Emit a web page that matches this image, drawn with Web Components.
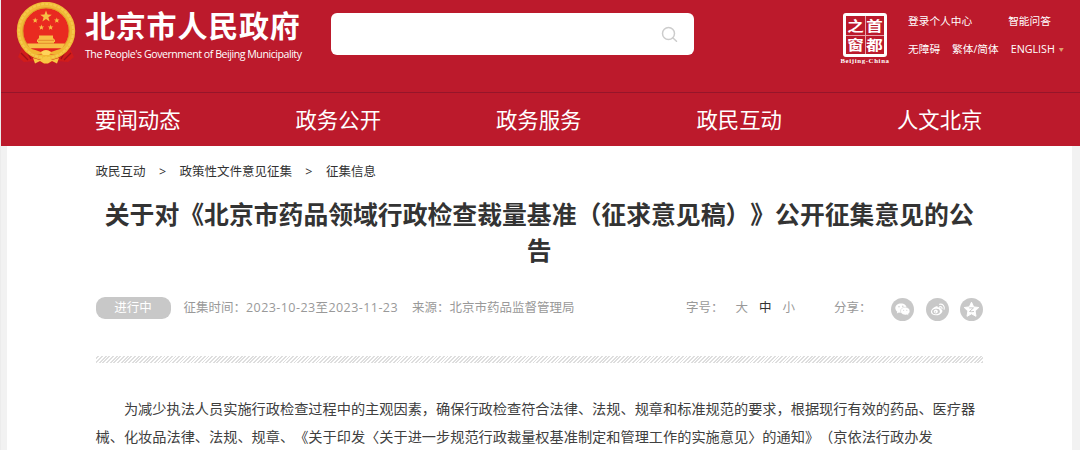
<!DOCTYPE html>
<html lang="zh-CN">
<head>
<meta charset="utf-8">
<title>北京市人民政府</title>
<style>
  body {
    margin: 0;
    width: 1080px;
    height: 450px;
    overflow: hidden;
    background: #f2f2f2;
    color: #333;
    font-family: "Open Sans", "Noto Sans CJK SC", sans-serif;
    text-spacing-trim: space-all;
  }
</style>
</head>
<body>
<gov-page>
  <gov-header slot="header"></gov-header>
  <gov-nav slot="header">
    <span>要闻动态</span>
    <span>政务公开</span>
    <span>政务服务</span>
    <span>政民互动</span>
    <span>人文北京</span>
  </gov-nav>
  <gov-crumbs>
    <span>政民互动</span><span>&gt;</span><span>政策性文件意见征集</span><span>&gt;</span><span>征集信息</span>
  </gov-crumbs>
  <gov-article>
    <span slot="title">关于对《北京市药品领域行政检查裁量基准（征求意见稿）》公开征集意见的公<br>告</span>
    <gov-meta slot="meta"></gov-meta>
    <span>为减少执法人员实施行政检查过程中的主观因素，确保行政检查符合法律、法规、规章和标准规范的要求，根据现行有效的药品、医疗器<br>械、化妆品法律、法规、规章、《关于印发〈关于进一步规范行政裁量权基准制定和管理工作的实施意见〉的通知》（京依法行政办发</span>
  </gov-article>
</gov-page>

<script>
/**
 * Base class, clones its markup into an open shadow root.
 */
class GovElement extends HTMLElement {
  /**
   * Constructor for all page elements.
   */
  constructor () {
    super()
    const template = document.createElement('template')
    template.innerHTML = this.constructor.markup
    this.attachShadow({ mode: 'open' })
    this.shadowRoot.appendChild(template.content.cloneNode(true))
  }
}

customElements.define('gov-page',
  /**
   * Represents the page frame with the red top and the white sheet.
   */
  class extends GovElement {
    static markup = `
      <style>
        :host { display: block; height: 450px; border-left: 1px solid #ececec; box-sizing: border-box; }
        .top { background: #bc1a2c; height: 146px; }
        main {
          box-sizing: border-box;
          height: 304px;
          margin: 0 8px 0 6px;
          padding: 0 89px 0 88.5px;
          background: #fff;
        }
      </style>
      <div class="top"><slot name="header"></slot></div>
      <main><slot></slot></main>
    `
  }
)

customElements.define('national-emblem',
  /**
   * Represents the emblem at the far left of the header.
   */
  class extends GovElement {
    static markup = `
      <style>
        :host { display: block; width: 60px; height: 64px; }
        svg { display: block; }
      </style>
      <svg width="60" height="64" viewBox="0 0 60 64">
        <path d="M7 44 L2 55 L8 60 L18 59 L30 62 L42 59 L52 60 L58 55 L53 44 Z" fill="#d11c1b"/>
        <path d="M5 51 l7 7 M55 51 l-7 7 M10 48 l5 9 M50 48 l-5 9" stroke="#9e1017" stroke-width="1.3"/>
        <circle cx="30" cy="29" r="26" fill="#e92a20" stroke="#f0bb37" stroke-width="6.4"/>
        <circle cx="30" cy="29" r="27" fill="none" stroke="#f6c94c" stroke-width="2" stroke-dasharray="3 1.2"/>
        <circle cx="30" cy="29" r="23.3" fill="none" stroke="#d99022" stroke-width=".7"/>
        <g fill="#f7be45">
          <path id="star" d="M30 8.5 l1.5 4 4.3.2-3.4 2.6 1.2 4.1-3.6-2.4-3.6 2.4 1.2-4.1-3.4-2.6 4.3-.2z"/>
          <use href="#star" transform="translate(4.8 11.5) scale(.48)"/>
          <use href="#star" transform="translate(26.4 11.5) scale(.48)"/>
          <use href="#star" transform="translate(11 18.5) scale(.48)"/>
          <use href="#star" transform="translate(20.2 18.5) scale(.48)"/>
          <path d="M23 33.500 H37 V36 L39 38 V40 H21 V38 L23 36 Z"/>
          <rect x="22" y="40" width="16" height="2.500"/>
          <path d="M11 41.500 H49 L46 46.500 H14 Z"/>
        </g>
        <path d="M22 38.300 H38 M22 41.300 H38" stroke="#dd7722" stroke-width=".7"/>
        <path d="M15 46.500 H45 L40 52 L30 53 L20 52 Z" fill="#e2231d"/>
        <path d="M12 46 Q20 48 25 50 Q30 46 35 50 Q40 48 48 46 L43 52 H35 L30 56 L25 52 H17 Z" fill="#f2b632"/>
        <path d="M25 50 Q30 46.500 35 50 L33 53 H27 Z" fill="#ffd35a"/>
        <path d="M17 56 L24 58 L30 54 L36 58 L43 56 L41 61.500 L36 59 L32 61.500 H28 L24 59 L19 61.500 Z" fill="#f8c743"/>
      </svg>
    `
  }
)

customElements.define('capital-window',
  /**
   * Represents the seal with four characters.
   */
  class extends GovElement {
    static markup = `
      <style>
        :host { display: block; width: 50px; color: #fff; }
        .seal {
          display: grid;
          grid-template: 19px 19px / 19px 19px;
          place-items: center;
          width: 38px;
          margin: 0 auto;
          border: 3px solid #fff;
          border-radius: 3px;
          font: 700 16.5px/17px "Noto Sans CJK SC", sans-serif;
          background:
            linear-gradient(#e8a4ab, #e8a4ab) 50% 0 / 1px 100% no-repeat,
            linear-gradient(#e8a4ab, #e8a4ab) 0 50% / 100% 1px no-repeat;
        }
        .seal span { transform: scaleY(.82); }
        p { margin: 0; font: 700 6.8px/8px "Liberation Serif", serif; letter-spacing: .65px; text-align: center; white-space: nowrap; }
      </style>
      <div class="seal"><span>之</span><span>首</span><span>窗</span><span>都</span></div>
      <p>Beijing-China</p>
    `
  }
)

customElements.define('gov-header',
  /**
   * Represents the header with brand, search and links.
   */
  class extends GovElement {
    static markup = `
      <style>
        :host {
          display: flex;
          box-sizing: border-box;
          height: 93px;
          padding: 2px 0 0 15px;
          border-bottom: 1px solid #96152a;
          color: #fff;
          white-space: nowrap;
        }
        .brand { width: 240px; margin-left: 9px; padding-top: 3px; }
        h1 { margin: 0; font: 700 30px/38px "Noto Sans CJK SC", sans-serif; letter-spacing: .8px; }
        .brand p { margin: 3px 0 0; font-size: 10.6px; line-height: 16px; letter-spacing: -.46px; }
        .search {
          display: flex;
          align-items: center;
          justify-content: flex-end;
          box-sizing: border-box;
          width: 363px;
          height: 42px;
          margin: 11px 0 0 6px;
          padding-right: 16px;
          border-radius: 6px;
          background: #fff;
        }
        capital-window { margin: 11px 0 0 146px; }
        .links { margin: 11px 0 0 18px; font-size: 10.7px; line-height: 16px; }
        .links div { display: flex; height: 28px; }
        .wide { gap: 36px; }
        .tight { gap: 12px; }
        small { font-size: 5px; color: #e0a070; margin-left: 4px; vertical-align: 2px; }
      </style>
      <national-emblem></national-emblem>
      <div class="brand">
        <h1>北京市人民政府</h1>
        <p>The People's Government of Beijing Municipality</p>
      </div>
      <div class="search">
        <svg width="17" height="17" viewBox="0 0 17 17" fill="none" stroke="#ccc" stroke-width="1.5">
          <circle cx="7.5" cy="7.5" r="6"/>
          <path d="M12 12 L15.5 15.2" stroke-linecap="round"/>
        </svg>
      </div>
      <capital-window></capital-window>
      <div class="links">
        <div class="wide"><span>登录个人中心</span><span>智能问答</span></div>
        <div class="tight"><span>无障碍</span><span>繁体/简体</span><span>ENGLISH<small>▼</small></span></div>
      </div>
    `
  }
)

customElements.define('gov-nav',
  /**
   * Represents the main navigation.
   */
  class extends GovElement {
    static markup = `
      <style>
        :host {
          display: flex;
          justify-content: space-between;
          height: 53px;
          margin: 0 97.5px 0 94px;
          color: #fff;
          font: 21.4px/51px "Noto Sans CJK SC", sans-serif;
        }
      </style>
      <slot></slot>
    `
  }
)

customElements.define('gov-crumbs',
  /**
   * Represents the breadcrumb trail.
   */
  class extends GovElement {
    static markup = `
      <style>
        :host { display: flex; gap: 13.4px; padding-top: 15px; height: 35px; font-size: 12.5px; line-height: 21px; }
      </style>
      <slot></slot>
    `
  }
)

customElements.define('share-icon',
  /**
   * Represents a round share button, picked by the name attribute.
   */
  class extends GovElement {
    static markup = `
      <style>
        :host { display: block; width: 23px; height: 23px; border-radius: 50%; background: #c8c8c8; }
        svg { display: none; }
        :host([name=wechat]) .wechat, :host([name=weibo]) .weibo, :host([name=qzone]) .qzone { display: block; }
      </style>
      <svg class="wechat" width="23" height="23" viewBox="0 0 23 23" fill="#fff">
        <path d="M10 5.500c-3.300 0-5.700 2-5.700 4.600 0 1.500.8 2.800 2 3.600l-.5 1.800 2.100-1.100c.7.2 1.400.3 2.100.3 3.300 0 5.700-2 5.700-4.600S13.300 5.500 10 5.500z"/>
        <path d="M14.200 9.200c-2.700 0-4.700 1.700-4.700 3.900s2 3.900 4.700 3.900c.6 0 1.200-.1 1.700-.3l1.700.9-.4-1.500c1.100-.7 1.700-1.800 1.700-3 0-2.200-2-3.900-4.700-3.900z" stroke="#c8c8c8" stroke-width=".5"/>
        <g fill="#c8c8c8"><circle cx="8" cy="8.800" r=".7"/><circle cx="11.800" cy="8.300" r=".7"/><circle cx="12.700" cy="12.300" r=".5"/><circle cx="15.800" cy="12.300" r=".5"/></g>
      </svg>
      <svg class="weibo" width="23" height="23" viewBox="0 0 23 23" fill="none">
        <path d="M9.800 8.400c1.200-.6 2.200-.2 2 1.200 1.900-.7 3.300-.3 2.800 1.300 1.600.5 2.200 1.600 1.600 3-.8 1.900-3.400 3.400-6.300 3.400-3 0-5-1.500-5-3.600 0-1.900 2.300-4.200 4.900-5.300z" fill="#fff"/>
        <ellipse cx="10" cy="13.500" rx="3.900" ry="2.700" fill="#c8c8c8" transform="rotate(-8 10 13.500)"/>
        <circle cx="9.800" cy="13.600" r="2" fill="#fff"/>
        <circle cx="9.400" cy="13.900" r=".7" fill="#c8c8c8"/>
        <path d="M13.500 6.300c3.100-.7 5.600 1.900 4.600 5M13.800 8.600c1.500-.3 2.600.7 2.200 2.200" stroke="#fff" stroke-width="1.100" stroke-linecap="round"/>
      </svg>
      <svg class="qzone" width="23" height="23" viewBox="0 0 23 23">
        <path d="M11.500 4.200l2.200 4.700 5.100.6-3.700 3.500.9 5.300-4.500-2.500L7 18.300l.9-5.300-3.700-3.500 5.100-.6z" fill="#fff" stroke="#fff" stroke-width="1" stroke-linejoin="round"/>
        <path d="M9.200 9.900h4.300l-4 3.600c1.300.3 2.900.3 4.500 0" fill="none" stroke="#c8c8c8" stroke-width="1"/>
      </svg>
    `
  }
)

customElements.define('gov-meta',
  /**
   * Represents the status line with font size and sharing.
   */
  class extends GovElement {
    static markup = `
      <style>
        :host { display: flex; align-items: center; height: 24px; color: #999; font-size: 12.5px; line-height: 22px; white-space: nowrap; }
        .badge { width: 75px; margin-right: 13px; border-radius: 9px; background: #c8c8c8; color: #fff; text-align: center; }
        .date { letter-spacing: .43px; }
        .source { margin-left: 14px; }
        .size { display: flex; gap: 11px; margin-left: auto; }
        .size span:first-child { margin-right: 1px; }
        .on { color: #333; }
        .share { display: flex; align-items: center; gap: 11.5px; margin-left: 39px; }
        .share span { margin-right: 8px; }
        share-icon { margin-top: 2px; }
      </style>
      <span class="badge">进行中</span>
      <span>征集时间：<span class="date">2023-10-23至2023-11-23</span></span>
      <span class="source">来源：北京市药品监督管理局</span>
      <div class="size"><span>字号：</span><span>大</span><span class="on">中</span><span>小</span></div>
      <div class="share">
        <span>分享：</span>
        <share-icon name="wechat"></share-icon>
        <share-icon name="weibo"></share-icon>
        <share-icon name="qzone"></share-icon>
      </div>
    `
  }
)

customElements.define('gov-article',
  /**
   * Represents the announcement: title, meta line, rule and text.
   */
  class extends GovElement {
    static markup = `
      <style>
        :host { display: block; white-space: nowrap; }
        h2 { margin: 0 -2px 28px; font-size: 24.83px; line-height: 36px; text-align: center; }
        hr {
          height: 7px;
          margin: 36px 0 0;
          border: 0;
          background: repeating-linear-gradient(135deg, #fff 0 1.3px, #dedede 1.3px 2.6px);
        }
        p { margin: 32px 0 0; color: #404040; font-size: 14.19px; line-height: 28.4px; text-indent: 2em; }
      </style>
      <h2><slot name="title"></slot></h2>
      <slot name="meta"></slot>
      <hr>
      <p><slot></slot></p>
    `
  }
)
</script>
</body>
</html>
